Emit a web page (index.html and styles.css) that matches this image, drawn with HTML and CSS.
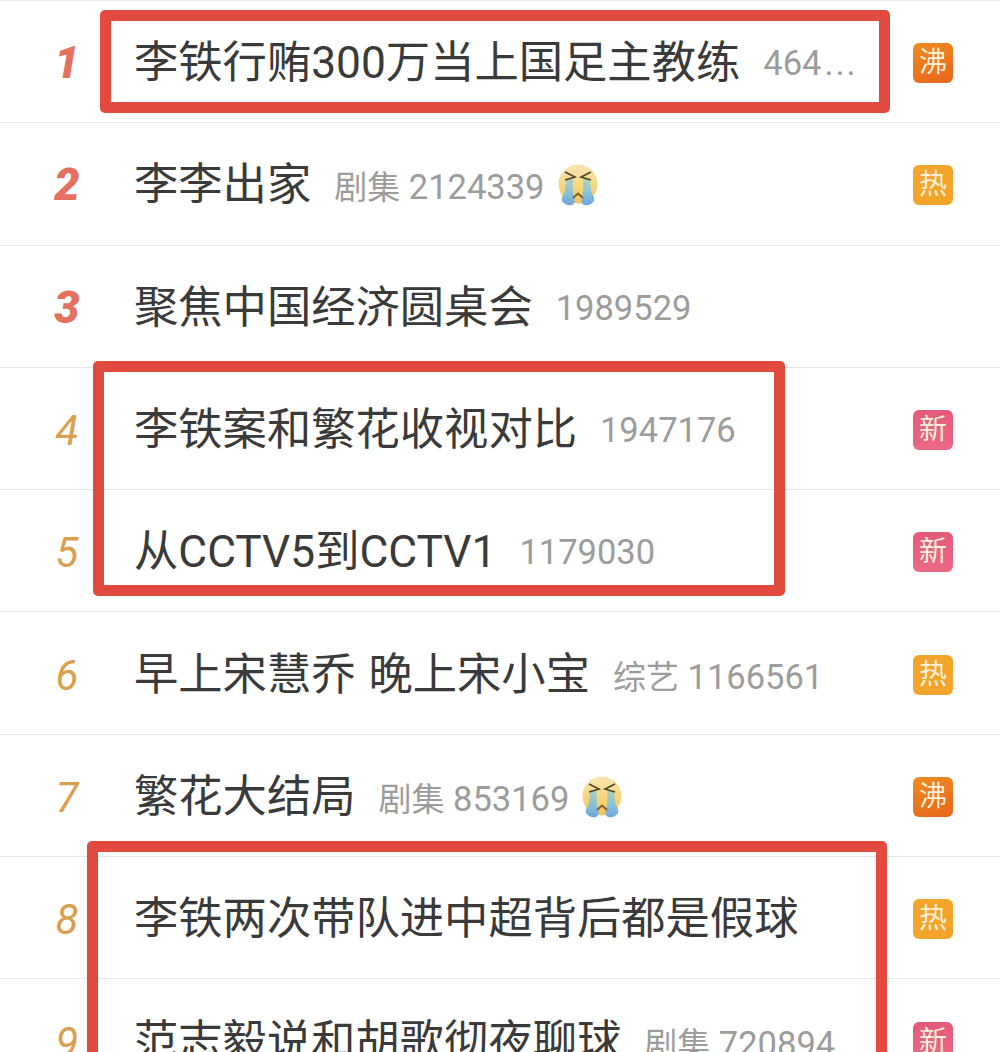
FILE: index.html
```html
<!DOCTYPE html>
<html>
<head>
    <title>热搜榜</title>
    <link rel="stylesheet" href="styles.css">
</head>
<body>
    <svg class="defs" width="0" height="0">
        <defs>
            <linearGradient id="faceFill" x1="0" y1="0" x2="0" y2="1">
                <stop offset="0" stop-color="#f6e6b4"/>
                <stop offset="0.55" stop-color="#f8d67c"/>
                <stop offset="1" stop-color="#f4c25c"/>
            </linearGradient>
            <linearGradient id="tearFill" x1="0" y1="0" x2="0" y2="1">
                <stop offset="0" stop-color="#a9d2c0"/>
                <stop offset="0.6" stop-color="#86bfd8"/>
                <stop offset="1" stop-color="#6ea2de"/>
            </linearGradient>
        </defs>
        <symbol id="cryFace" viewBox="0 0 40 42">
            <circle cx="20" cy="20" r="19.5" fill="url(#faceFill)"/>
            <path d="M8 15 L15 15 Q14 25 16 33 Q18 39 14 41 Q7 42 4 37 Q3 33 6 30 Q8 22 8 15 Z" fill="url(#tearFill)"/>
            <path d="M32 15 L25 15 Q26 25 24 33 Q22 39 26 41 Q33 42 36 37 Q37 33 34 30 Q32 22 32 15 Z" fill="url(#tearFill)"/>
            <path d="M7 8 L17 13 L7 16 M33 8 L23 13 L33 16" stroke="#4e432c" stroke-width="1.6" fill="none"/>
            <path d="M15 34 L20 29.5 L25 34" stroke="#7b5a2c" stroke-width="1.8" fill="none"/>
        </symbol>
    </svg>

    <div class="page">
        <div class="list">
            <div class="row">
                <span class="rank top">1</span>
                <div class="info"><span class="title">李铁行贿300万当上国足主教练</span><span class="meta">464<span class="dots">...</span></span></div>
                <span class="badge boil">沸</span>
            </div>
            <div class="row">
                <span class="rank top">2</span>
                <div class="info"><span class="title">李李出家</span><span class="meta"><span class="tag">剧集</span> 2124339</span><svg class="emoji"><use href="#cryFace"/></svg></div>
                <span class="badge hot">热</span>
            </div>
            <div class="row">
                <span class="rank top">3</span>
                <div class="info"><span class="title">聚焦中国经济圆桌会</span><span class="meta">1989529</span></div>
            </div>
            <div class="row">
                <span class="rank">4</span>
                <div class="info"><span class="title">李铁案和繁花收视对比</span><span class="meta">1947176</span></div>
                <span class="badge new">新</span>
            </div>
            <div class="row">
                <span class="rank">5</span>
                <div class="info"><span class="title">从CCTV5到CCTV1</span><span class="meta">1179030</span></div>
                <span class="badge new">新</span>
            </div>
            <div class="row">
                <span class="rank">6</span>
                <div class="info"><span class="title">早上宋慧乔 晚上宋小宝</span><span class="meta"><span class="tag">综艺</span> 1166561</span></div>
                <span class="badge hot">热</span>
            </div>
            <div class="row">
                <span class="rank">7</span>
                <div class="info"><span class="title">繁花大结局</span><span class="meta"><span class="tag">剧集</span> 853169</span><svg class="emoji"><use href="#cryFace"/></svg></div>
                <span class="badge boil">沸</span>
            </div>
            <div class="row">
                <span class="rank">8</span>
                <div class="info"><span class="title">李铁两次带队进中超背后都是假球</span></div>
                <span class="badge hot">热</span>
            </div>
            <div class="row">
                <span class="rank">9</span>
                <div class="info"><span class="title">范志毅说和胡歌彻夜聊球</span><span class="meta"><span class="tag">剧集</span> 720894</span></div>
                <span class="badge new">新</span>
            </div>
        </div>

        <!-- red marker boxes drawn over the screenshot -->
        <div class="mark mark-one"></div>
        <div class="mark mark-two"></div>
        <div class="mark mark-three"></div>
    </div>
</body>
</html>
```

FILE: styles.css
```css
html, body {
    margin: 0;
    height: 100%;
    background-color: #fff;
    overflow: hidden;
}

.defs {
    display: block;
}

.page {
    position: relative;
    height: 1052px;
    overflow: hidden;
    font-family: "Roboto", "Noto Sans CJK SC", sans-serif;
}

.list {
    border-top: 1px solid #e8ecea;
}

.row {
    display: flex;
    align-items: center;
    height: 121.3px;
    border-bottom: 1px solid #e6e6e6;
    padding-right: 47px;
}

.rank {
    flex: none;
    width: 134px;
    padding-top: 4px;
    text-align: center;
    font-style: italic;
    font-size: 42px;
    color: #d99f4e;
}

.rank.top {
    padding-top: 2px;
    font-weight: 900;
    font-size: 45px;
    color: #e4705f;
}

.info {
    flex: 1;
    display: flex;
    align-items: center;
    min-width: 0;
}

.title {
    padding-top: 3px;
    font-size: 44.3px;
    line-height: 60px;
    word-spacing: 2px;
    color: #3a3a3a;
    white-space: nowrap;
}

.meta {
    margin-left: 23px;
    padding-top: 3px;
    font-size: 34.5px;
    color: #9c9c9c;
    white-space: nowrap;
}

.tag {
    font-size: 33px;
}

.dots {
    margin-left: 3px;
    letter-spacing: 2px;
}

.emoji {
    width: 40px;
    height: 42px;
    margin-top: 3px;
    margin-left: 13px;
}

.badge {
    flex: none;
    width: 40px;
    height: 40px;
    margin-top: 3px;
    border-radius: 6px;
    text-align: center;
    font-size: 28px;
    line-height: 39px;
    color: #fdf0d8;
}

.badge.boil {
    background: linear-gradient(160deg, #ee8c20, #e8651c);
}

.badge.hot {
    background-color: #f3a42a;
}

.badge.new {
    background: linear-gradient(180deg, #e5597a, #ea6a86);
}

.mark {
    position: absolute;
    box-sizing: border-box;
    border: 11px solid #e2493f;
    border-radius: 5px;
}

.mark-one {
    left: 100px;
    top: 10px;
    width: 790px;
    height: 103px;
}

.mark-two {
    left: 93px;
    top: 361px;
    width: 692px;
    height: 235px;
}

.mark-three {
    left: 87px;
    top: 841px;
    width: 800px;
    height: 260px;
}
```
